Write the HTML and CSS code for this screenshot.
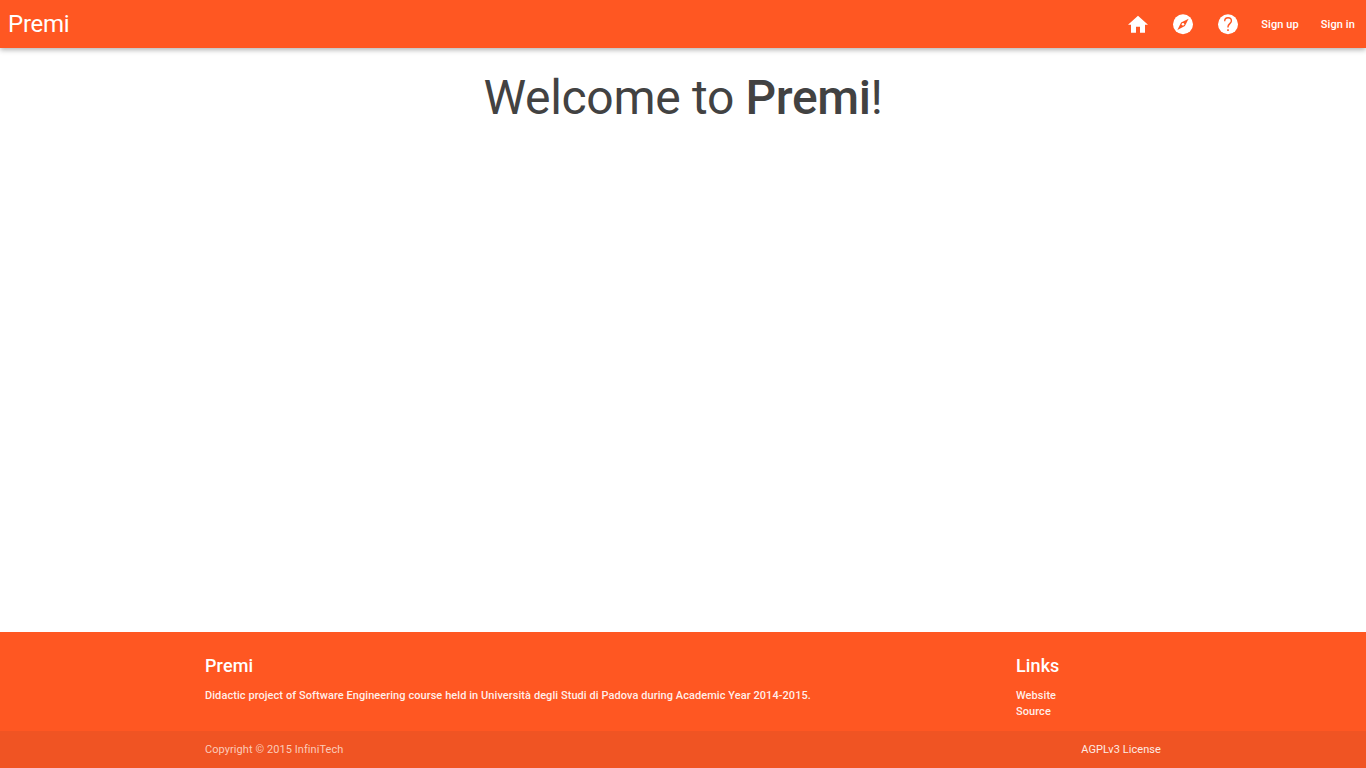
FILE: index.html
```html
<!DOCTYPE html>
<html lang="en">
<head>
<meta charset="utf-8">
<title>Premi</title>
<link rel="stylesheet" href="styles.css">
</head>
<body>
<header class="toolbar">
  <a class="brand">Premi</a>
  <nav class="nav">
    <a class="icon-link" aria-label="Home"><svg viewBox="0 0 24 24"><path d="M10 20.7v-6h4v6h5v-8h3L12 3.7 2 12.7h3v8z"/></svg></a>
    <a class="icon-link" aria-label="Explore"><svg viewBox="0 0 24 24"><circle cx="12" cy="12.3" r="10"/><path class="needle" d="M17.6 6.7 13.9 14 6.4 17.9 10.1 10.6z"/><circle cx="12" cy="12.3" r="1.3"/></svg></a>
    <a class="icon-link" aria-label="Help"><svg viewBox="0 0 24 24"><circle cx="12" cy="12.3" r="10"/><path class="question" d="M8.7 9.2C8.7 7.1 10.1 5.8 12 5.8s3.4 1.2 3.4 3.1c0 2.6-3.4 2.9-3.4 5.9v.8"/><path class="question-dot" d="M11.2 17.2h1.6v1.7h-1.6z"/></svg></a>
    <a class="text-link sign-up">Sign up</a>
    <a class="text-link sign-in">Sign in</a>
  </nav>
</header>
<main class="content">
  <h1 class="welcome">Welcome to <strong class="name">Premi</strong>!</h1>
</main>
<footer class="footer">
  <div class="footer-main">
    <section class="about">
      <h2 class="footer-title">Premi</h2>
      <p class="footer-text">Didactic project of Software Engineering course held in Università degli Studi di Padova during Academic Year 2014-2015.</p>
    </section>
    <section class="links">
      <h2 class="footer-title">Links</h2>
      <p class="footer-text">Website</p>
      <p class="footer-text">Source</p>
    </section>
  </div>
  <div class="footer-bar">
    <span class="copyright">Copyright © 2015 InfiniTech</span>
    <a class="license">AGPLv3 License</a>
  </div>
</footer>
</body>
</html>
```
FILE: styles.css
```css
* { box-sizing: border-box; }
body {
  margin: 0;
  height: 768px;
  display: flex;
  flex-direction: column;
  overflow: hidden;
  font-family: Roboto, sans-serif;
  background: #fff;
  color: #424242;
}
.toolbar {
  height: 48px;
  flex: none;
  display: flex;
  align-items: center;
  justify-content: space-between;
  padding: 0 11px 0 8px;
  background: #ff5722;
  color: #fff;
  box-shadow: 0 2px 5px rgba(0, 0, 0, .3);
}
.brand { font-size: 24px; letter-spacing: -.25px; }
.nav { display: flex; align-items: center; }
.icon-link { width: 24px; height: 24px; margin-right: 21px; }
.icon-link svg { display: block; width: 24px; height: 24px; fill: currentColor; }
.icon-link .question { fill: none; stroke: #ff5722; stroke-width: 1.4; }
.icon-link .question-dot,
.icon-link .needle { fill: #ff5722; }
.text-link { font-size: 11px; font-weight: 500; letter-spacing: .1px; white-space: nowrap; }
.sign-up { margin-right: 22px; }
.content { flex: 1; text-align: center; }
.welcome { margin: 22px 0 0; font-size: 48px; line-height: 56px; font-weight: 400; letter-spacing: -.3px; }
.name { font-weight: 500; letter-spacing: -.4px; }
.footer { flex: none; background: #ff5722; color: #fff; }
.footer-main {
  height: 99px;
  display: flex;
  justify-content: space-between;
  padding: 23px 205px 0;
}
.links { width: 145px; }
.footer-title { margin: 0 0 11px; font-size: 18px; line-height: 22px; font-weight: 500; letter-spacing: .1px; }
.footer-text { margin: 0; font-size: 11px; line-height: 16px; font-weight: 500; letter-spacing: .067px; color: rgba(255, 255, 255, .92); }
.footer-bar {
  height: 37px;
  display: flex;
  align-items: center;
  justify-content: space-between;
  padding: 0 205px;
  background: #f05423;
  font-size: 11px;
  letter-spacing: .07px;
}
.copyright { color: #fbcbb9; }
.license { color: #fdebe4; }
```
